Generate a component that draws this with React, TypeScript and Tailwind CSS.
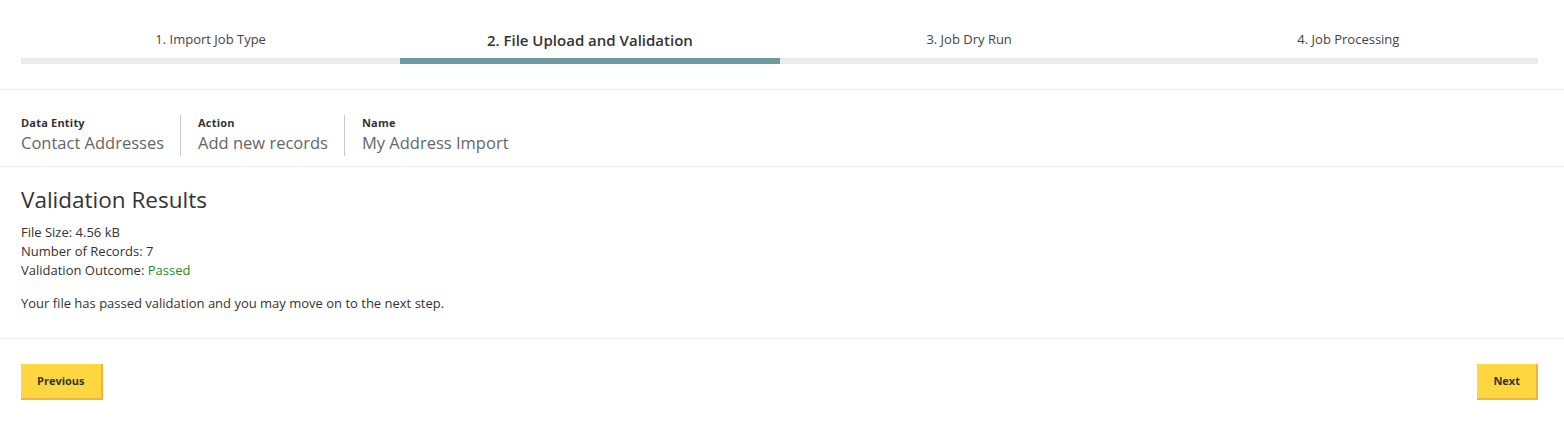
import * as React from "react";

const steps = [
  "1. Import Job Type",
  "2. File Upload and Validation",
  "3. Job Dry Run",
  "4. Job Processing",
];

const summary = [
  { label: "Data Entity", value: "Contact Addresses" },
  { label: "Action", value: "Add new records" },
  { label: "Name", value: "My Address Import" },
];

function Stepper({ active }: { active: number }) {
  return (
    <div className="pl-[21px] pr-[26px] pt-[29px] pb-[25px] border-b border-[#ececec]">
      <div className="grid grid-cols-4">
        {steps.map((step, i) => (
          <div key={step} className="flex flex-col">
            <div
              className={
                i === active
                  ? "h-[22px] mb-[7px] flex items-center justify-center text-[15px] font-semibold text-[#333]"
                  : "h-[22px] mb-[7px] flex items-center justify-center text-[13px] text-[#444]"
              }
            >
              {step}
            </div>
            <div className={i === active ? "h-[6px] bg-[#6f989f]" : "h-[6px] bg-[#ebebeb]"} />
          </div>
        ))}
      </div>
    </div>
  );
}

function YellowButton({ children }: { children: React.ReactNode }) {
  return (
    <button className="h-[36px] px-[16px] bg-[#fdd640] border-r-2 border-b-2 border-[#efb43d] text-[11px] font-bold text-[#333]">
      {children}
    </button>
  );
}

export default function App() {
  return (
    <div
      className="w-[1564px] h-[424px] bg-white text-[#333]"
      style={{ fontFamily: '"Open Sans", "Liberation Sans", sans-serif' }}
    >
      <Stepper active={1} />

      <div className="flex px-[21px] pt-[25px] pb-[10px] border-b border-[#ececec]">
        {summary.map((item, i) => (
          <div
            key={item.label}
            className={
              i === 0
                ? "pr-[16px] h-[41px]"
                : "pl-[17px] pr-[16px] h-[41px] border-l border-[#c8c8c8]"
            }
          >
            <div className="mt-[1px] text-[11px] leading-[14px] font-bold text-[#333] tracking-[0.2px]">
              {item.label}
            </div>
            <div className="mt-[1px] text-[16.5px] leading-[24px] text-[#666]">{item.value}</div>
          </div>
        ))}
      </div>

      <div className="px-[21px] pt-[18px] pb-[25px] border-b border-[#ececec]">
        <h2 className="text-[22.5px] leading-[30px] text-[#333] mb-[8px]">Validation Results</h2>
        <div className="text-[13px] leading-[19px] text-[#333]">
          <div>File Size: 4.56 kB</div>
          <div>Number of Records: 7</div>
          <div>
            Validation Outcome: <span className="text-[#1e8a2e]">Passed</span>
          </div>
        </div>
        <p className="mt-[14px] text-[13px] leading-[19px] text-[#333]">
          Your file has passed validation and you may move on to the next step.
        </p>
      </div>

      <div className="flex justify-between pl-[21px] pr-[26px] pt-[25px]">
        <YellowButton>Previous</YellowButton>
        <YellowButton>Next</YellowButton>
      </div>
    </div>
  );
}
